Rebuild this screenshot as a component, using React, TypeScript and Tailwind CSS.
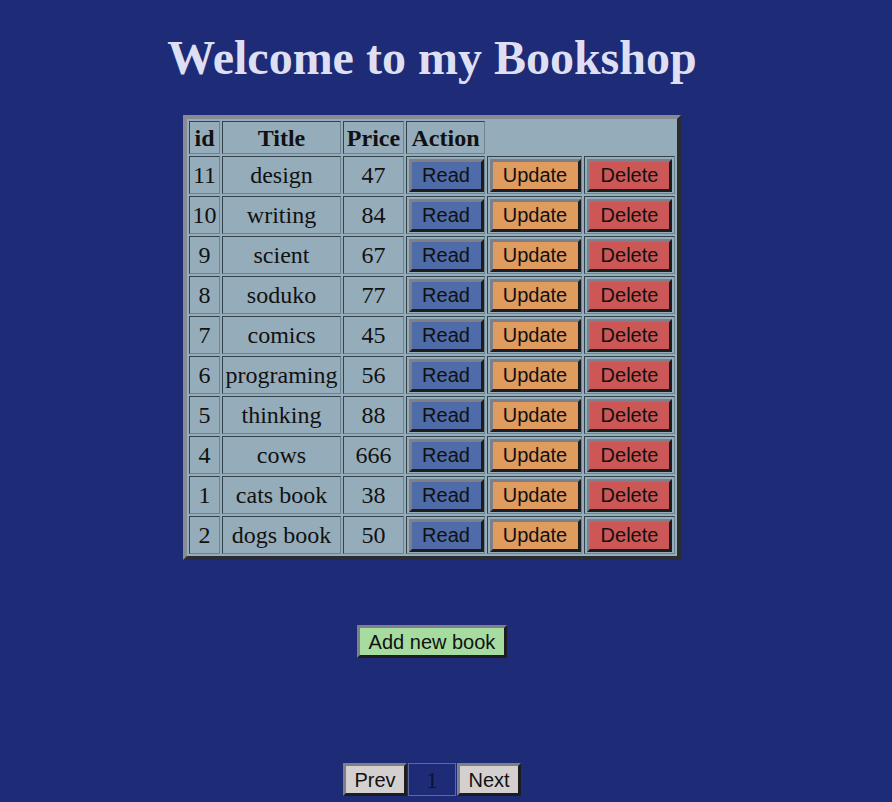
import React from "react";

type Book = {
  id: number;
  title: string;
  price: number;
};

const books: Book[] = [
  { id: 11, title: "design", price: 47 },
  { id: 10, title: "writing", price: 84 },
  { id: 9, title: "scient", price: 67 },
  { id: 8, title: "soduko", price: 77 },
  { id: 7, title: "comics", price: 45 },
  { id: 6, title: "programing", price: 56 },
  { id: 5, title: "thinking", price: 88 },
  { id: 4, title: "cows", price: 666 },
  { id: 1, title: "cats book", price: 38 },
  { id: 2, title: "dogs book", price: 50 },
];

const cell =
  "border border-t-[#33434b] border-l-[#33434b] border-b-[#6f838e] border-r-[#6f838e] p-[1.5px] text-center align-middle";

const btn =
  "block h-[33px] border-[3px] border-t-[#7d8088] border-l-[#7d8088] border-b-[#1d1d1f] border-r-[#1d1d1f] text-[20px] leading-none text-[#111] font-['Liberation_Sans',Arial,sans-serif]";

export default function App() {
  return (
    <div className="min-h-[802px] w-full bg-[#1e2c78] font-['Liberation_Serif','Times_New_Roman',serif]">
      <div className="flex w-[864px] flex-col items-center">
        <h1 className="mt-[31px] text-[48px] leading-[53px] font-bold text-[#dfdff4]">
          Welcome to my Bookshop
        </h1>

        <table className="mt-[31px] w-[498px] table-fixed border-separate border-spacing-[2px] border-4 border-t-[#878c94] border-l-[#878c94] border-b-[#2a2c31] border-r-[#2a2c31] bg-[#95adbb] text-[24px] leading-[27px] text-[#111]">
          <colgroup>
            <col className="w-[31px]" />
            <col className="w-[119px]" />
            <col className="w-[61px]" />
            <col className="w-[79px]" />
            <col className="w-[95px]" />
            <col className="w-[91px]" />
          </colgroup>
          <thead>
            <tr className="leading-[28px] font-bold">
              <td className={cell}>id</td>
              <td className={cell}>Title</td>
              <td className={cell}>Price</td>
              <td className={cell}>Action</td>
            </tr>
          </thead>
          <tbody>
            {books.map((book) => (
              <tr key={book.id}>
                <td className={cell}>{book.id}</td>
                <td className={`${cell} whitespace-nowrap`}>{book.title}</td>
                <td className={cell}>{book.price}</td>
                <td className={cell}>
                  <button className={`${btn} mx-auto w-[75px] bg-[#4f6ba8]`}>Read</button>
                </td>
                <td className={cell}>
                  <button className={`${btn} mx-auto w-[91px] bg-[#e09b5f]`}>Update</button>
                </td>
                <td className={cell}>
                  <button className={`${btn} mx-auto w-[85px] bg-[#cd5757]`}>Delete</button>
                </td>
              </tr>
            ))}
          </tbody>
        </table>

        <button className={`${btn} mt-[65px] w-[150px] bg-[#a7dca1]`}>
          Add new book
        </button>

        <div className="mt-[105px] flex items-center">
          <button className={`${btn} w-[64px] bg-[#d5d0d0]`}>Prev</button>
          <div className="mx-px flex h-[33px] w-[48px] items-center justify-center border border-[#5b6aa0] text-[24px] text-[#0b1238]">
            1
          </div>
          <button className={`${btn} w-[64px] bg-[#d5d0d0]`}>Next</button>
        </div>
      </div>
    </div>
  );
}
